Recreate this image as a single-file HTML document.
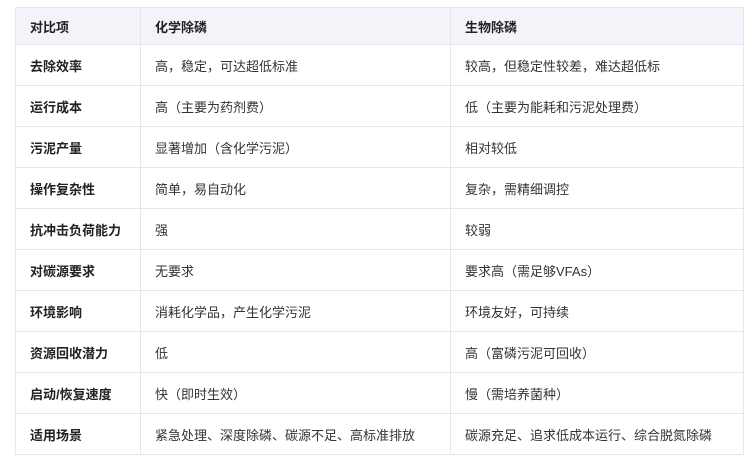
<!DOCTYPE html><html><head><meta charset="utf-8"><style>
body{margin:0;background:#fff;font-family:"Liberation Sans","Noto Sans CJK SC",sans-serif;font-size:13px;color:#333}
table{position:absolute;left:15px;top:7px;width:729px;border-collapse:collapse;table-layout:fixed}
td,th{border:1px solid #e6e7ee;padding:0 0 0 14px;text-align:left;height:40px;white-space:nowrap}
th{background:#f3f4fa;height:36px;font-weight:bold;color:#222}
td:first-child{font-weight:bold;color:#222}
</style></head><body>
<table>
<colgroup><col style="width:125px"><col style="width:310px"><col></colgroup>
<tr><th>对比项</th><th>化学除磷</th><th>生物除磷</th></tr>
<tr><td>去除效率</td><td>高，稳定，可达超低标准</td><td>较高，但稳定性较差，难达超低标</td></tr>
<tr><td>运行成本</td><td>高（主要为药剂费）</td><td>低（主要为能耗和污泥处理费）</td></tr>
<tr><td>污泥产量</td><td>显著增加（含化学污泥）</td><td>相对较低</td></tr>
<tr><td>操作复杂性</td><td>简单，易自动化</td><td>复杂，需精细调控</td></tr>
<tr><td>抗冲击负荷能力</td><td>强</td><td>较弱</td></tr>
<tr><td>对碳源要求</td><td>无要求</td><td>要求高（需足够VFAs）</td></tr>
<tr><td>环境影响</td><td>消耗化学品，产生化学污泥</td><td>环境友好，可持续</td></tr>
<tr><td>资源回收潜力</td><td>低</td><td>高（富磷污泥可回收）</td></tr>
<tr><td>启动/恢复速度</td><td>快（即时生效）</td><td>慢（需培养菌种）</td></tr>
<tr><td>适用场景</td><td>紧急处理、深度除磷、碳源不足、高标准排放</td><td>碳源充足、追求低成本运行、综合脱氮除磷</td></tr>
</table>
</body></html>
